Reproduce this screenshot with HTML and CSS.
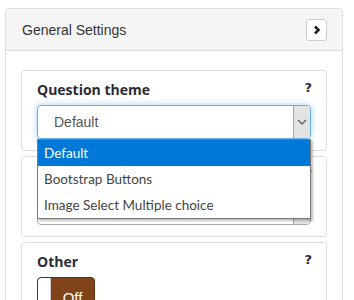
FILE: index.html
```html
<!DOCTYPE html>
<html>
<head>
   <meta charset="UTF-8">
   <meta name="viewport" content="width=device-width, initial-scale=1.0">
   <title>General Settings</title>
   <link rel="stylesheet" href="styles.css">
</head>
<body>
   <div class="panel">
       <div class="panel-heading">
           <span class="panel-title">General Settings</span>
           <button class="collapse-button">
               <svg width="8" height="10" viewBox="0 0 8 10"><path d="M2 1.5 L5.5 5 L2 8.5" fill="none" stroke="#222" stroke-width="2.6"/></svg>
           </button>
       </div>

       <div class="panel-body">
           <div class="setting">
               <div class="setting-head">
                   <label class="setting-label">Question theme</label>
                   <span class="help">?</span>
               </div>
               <div class="select is-open">
                   <span class="select-value">Default</span>
                   <span class="select-arrow">
                       <svg width="10" height="6" viewBox="0 0 10 6"><path d="M1 1 L5 5 L9 1" fill="none" stroke="#555" stroke-width="1.2"/></svg>
                   </span>
                   <ul class="select-options">
                       <li class="selected">Default</li>
                       <li>Bootstrap Buttons</li>
                       <li>Image Select Multiple choice</li>
                   </ul>
               </div>
           </div>

           <div class="setting">
               <div class="setting-head">
                   <label class="setting-label">Question group</label>
                   <span class="help">?</span>
               </div>
               <div class="select">
                   <span class="select-value">Group 1</span>
                   <span class="select-arrow">
                       <svg width="10" height="6" viewBox="0 0 10 6"><path d="M1 1 L5 5 L9 1" fill="none" stroke="#555" stroke-width="1.2"/></svg>
                   </span>
               </div>
           </div>

           <div class="setting">
               <div class="setting-head">
                   <label class="setting-label">Other</label>
                   <span class="help">?</span>
               </div>
               <div class="switch">
                   <span class="switch-handle"></span>
                   <span class="switch-text">Off</span>
               </div>
           </div>
       </div>
   </div>
</body>
</html>
```

FILE: styles.css
```css
* {
    margin: 0;
    padding: 0;
    box-sizing: border-box;
}

body {
    font-family: 'Liberation Sans', Arial, sans-serif;
    font-size: 14px;
    color: #333;
    background-color: #fff;
    padding: 8px 11px 0 5px;
}

.panel {
    border: 1px solid #ddd;
    border-radius: 4px;
    background-color: #fff;
}

.panel-heading {
    display: flex;
    justify-content: space-between;
    align-items: center;
    height: 42px;
    padding: 0 15px 0 16px;
    background-color: #f5f5f5;
    border-bottom: 1px solid #ddd;
    border-radius: 3px 3px 0 0;
}

.panel-title {
    font-size: 14px;
    color: #333;
}

.collapse-button {
    width: 21px;
    height: 22px;
    display: flex;
    align-items: center;
    justify-content: center;
    background-color: #fff;
    border: 1px solid #ccc;
    border-radius: 3px;
}

.panel-body {
    padding: 19px 15px;
}

.setting {
    border: 1px solid #ddd;
    border-radius: 4px;
    padding: 10px 15px 11px;
    margin-bottom: 5px;
}

.setting-head {
    display: flex;
    justify-content: space-between;
    align-items: flex-start;
    height: 18px;
    margin-bottom: 6px;
}

.setting-label {
    font-family: 'Open Sans', sans-serif;
    font-weight: 700;
    font-size: 14px;
    line-height: 18px;
    color: #2b2b35;
}

.help {
    font-family: 'DejaVu Sans', sans-serif;
    font-weight: 700;
    font-size: 13px;
    line-height: 14px;
    color: #2b2b35;
    margin-right: -1px;
}

.select {
    position: relative;
    display: flex;
    align-items: center;
    height: 34px;
    border: 1px solid #aaa;
    border-radius: 4px;
    background-color: #fff;
}

.select.is-open {
    border-color: #66afe9;
    box-shadow: 0 0 6px rgba(102, 175, 233, 0.6);
}

.select-value {
    flex: 1;
    padding-left: 16px;
    color: #555;
}

.select-arrow {
    width: 17px;
    align-self: stretch;
    display: flex;
    align-items: center;
    justify-content: center;
    background-color: #e3e3e3;
    border-left: 1px solid #a5a5a5;
    border-radius: 0 3px 3px 0;
}

.select-options {
    position: absolute;
    top: 33px;
    left: -1px;
    right: -1px;
    list-style: none;
    background-color: #fff;
    border: 1px solid #7a7a7a;
    box-shadow: 2px 2px 2px rgba(0, 0, 0, 0.25);
    z-index: 2;
}

.select-options li {
    height: 26px;
    line-height: 26px;
    padding-left: 6px;
    font-family: 'Lato', sans-serif;
    font-size: 13.5px;
    color: #444;
}

.select-options li.selected {
    background-color: #0078d7;
    color: #fff;
}

.switch {
    display: flex;
    width: 58px;
    height: 34px;
    border: 1px solid #5e2f10;
    border-radius: 4px;
    background-color: #7f4219;
    overflow: hidden;
}

.switch-handle {
    width: 13px;
    background-color: #fff;
    border-right: 1px solid #ccc;
    border-radius: 3px 0 0 3px;
}

.switch-text {
    flex: 1;
    text-align: center;
    line-height: 40px;
    color: #fff;
    font-size: 15px;
}
```
